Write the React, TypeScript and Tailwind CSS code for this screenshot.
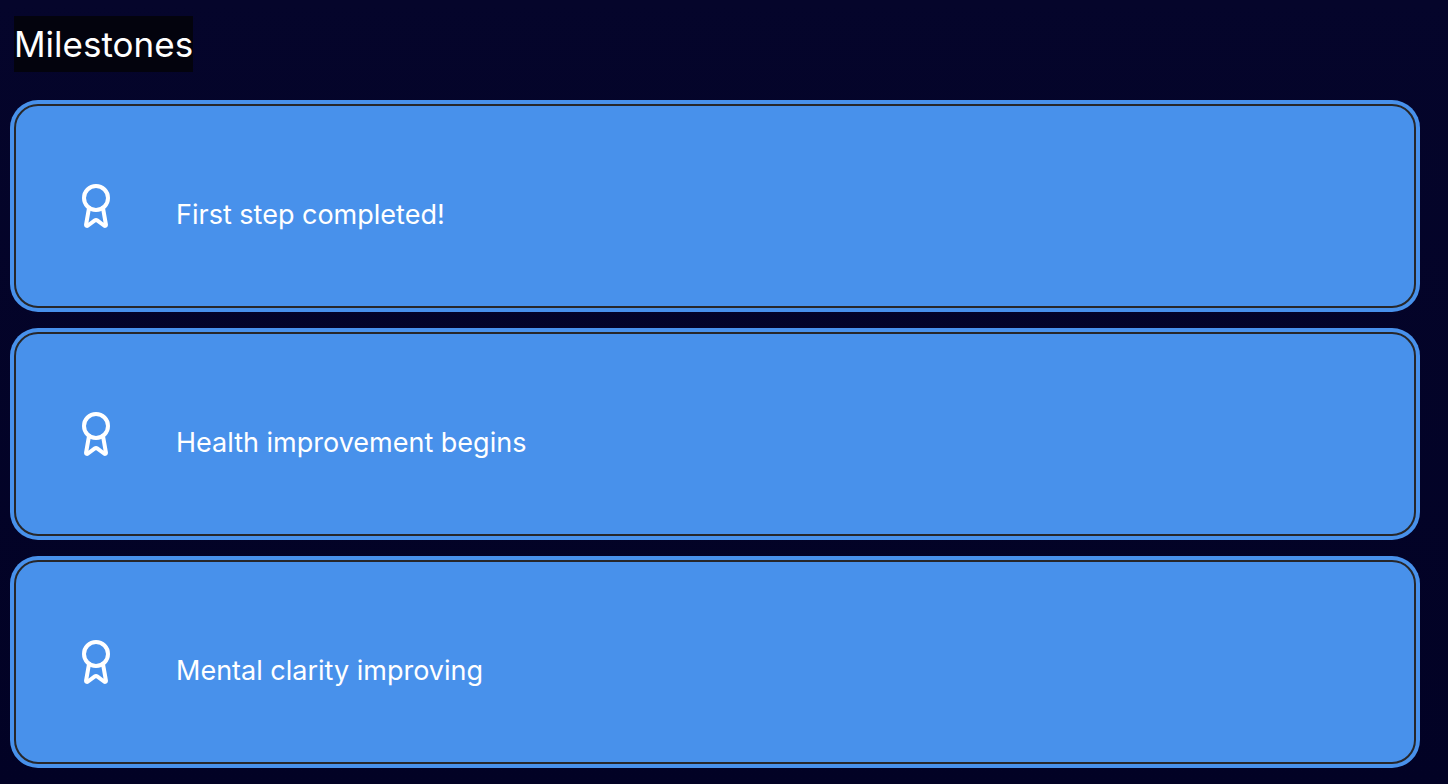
import { Award } from "lucide-react";

const milestones = [
  "First step completed!",
  "Health improvement begins",
  "Mental clarity improving",
];

export default function App() {
  return (
    <main className="min-h-screen bg-linear-to-b from-[#05052b] to-[#020225] pt-4 pr-7 pb-4 pl-2.5 font-[Inter,sans-serif] text-white">
      <h1 className="ml-1 w-fit bg-[#03030d] text-[35px] leading-[56px] font-normal">Milestones</h1>
      <ul className="mt-7 flex flex-col gap-4">
        {milestones.map((text) => (
          <li key={text} className="rounded-[28px] bg-[#4891eb] p-1">
            <div className="flex h-[204px] items-center rounded-[24px] border-2 border-[#27272a] pl-14">
              <Award className="size-12" strokeWidth={2} aria-hidden="true" />
              <p className="mt-[18px] ml-14 text-[27px] leading-10">{text}</p>
            </div>
          </li>
        ))}
      </ul>
    </main>
  );
}
